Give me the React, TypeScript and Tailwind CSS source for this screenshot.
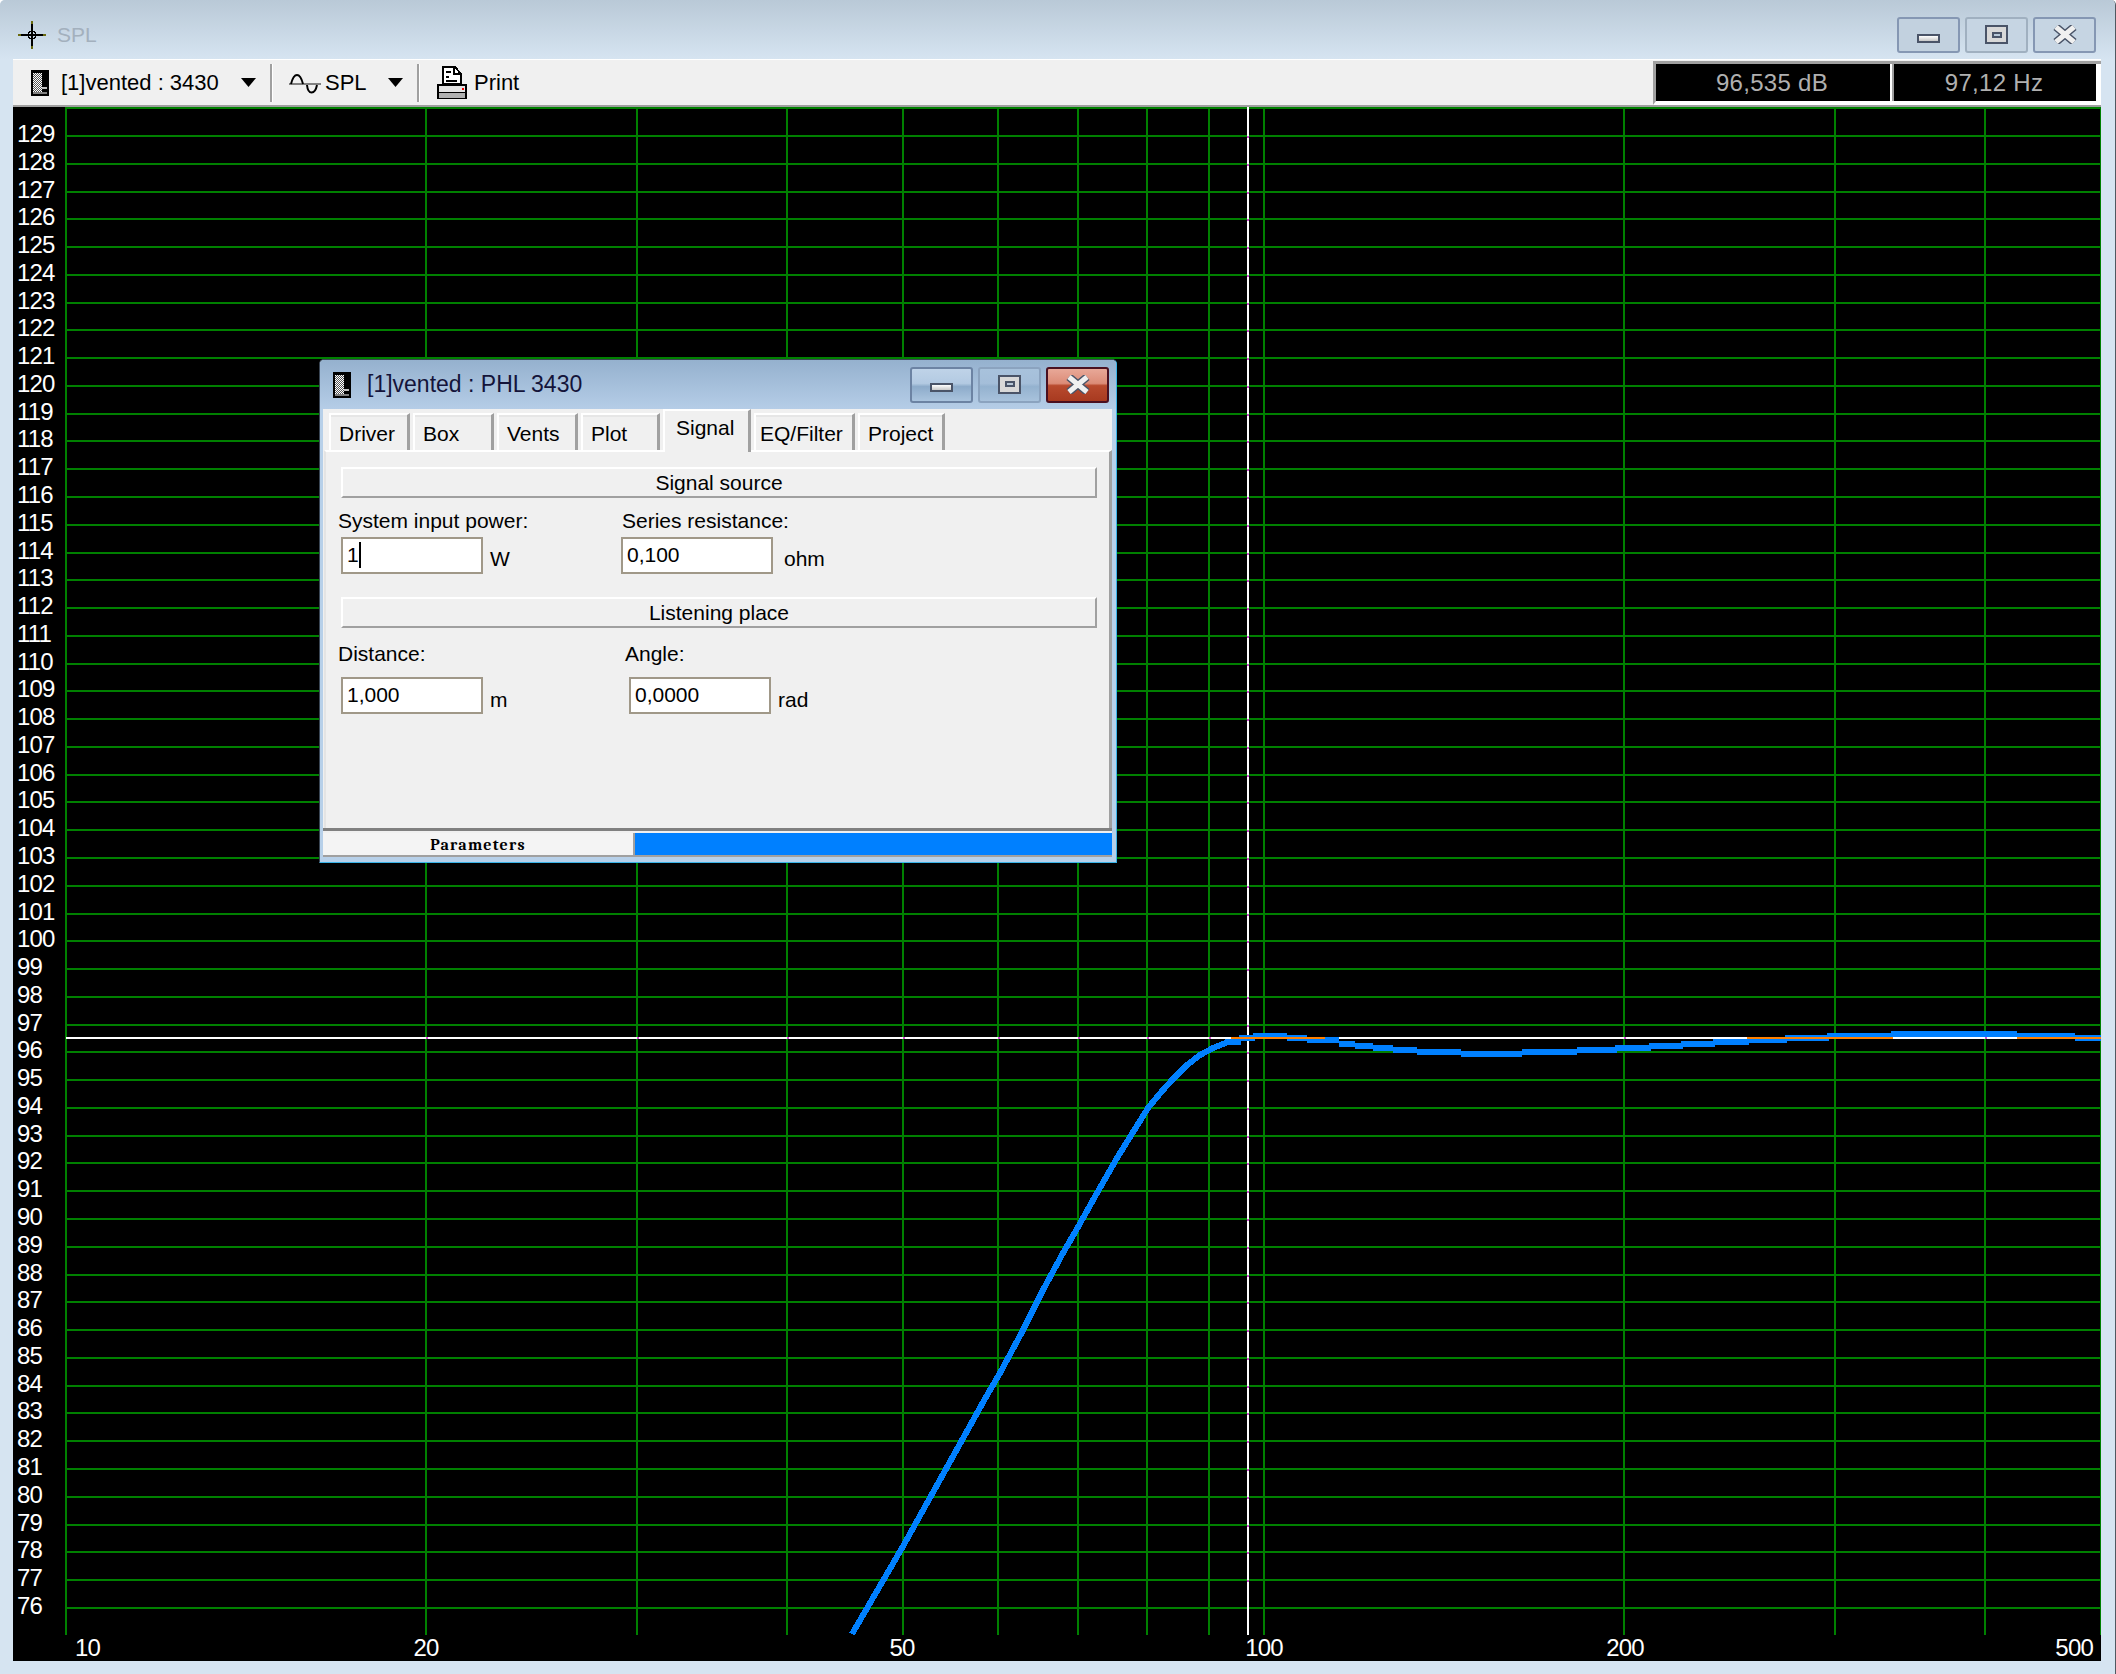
const SANS = '[font-family:Liberation_Sans,Arial,sans-serif]'

const xOf = (f: number) => 65.5 + 1198 * Math.log10(f / 10)
const yOf = (v: number) => 136 + (129 - v) * 27.77

const FREQS = [20, 30, 40, 50, 60, 70, 80, 90, 100, 200, 300, 400, 500]
const LEVELS = Array.from({ length: 55 }, (_, i) => 130 - i)
const LABELS = LEVELS.slice(1)
const CURSOR_X = 1247
const CURSOR_Y = 1037

// rising part of the response
const RISE =
  '852,1634 902,1548 986,1397 1000,1373 1022,1332 1043,1290 1063,1253 1078,1227 1097,1193 1117,1158 1130,1137 1148,1108 1163,1090 1173,1079 1187,1065 1200,1055 1213,1048 1228,1042'
// flat part, it's drawn in pixel steps: [x1, x2, centre y]
const STEPS = [
  [1225, 1241, 1042], [1239, 1255, 1038], [1253, 1287, 1036], [1287, 1307, 1038], [1307, 1339, 1040],
  [1339, 1355, 1044], [1355, 1373, 1046], [1373, 1393, 1048], [1393, 1417, 1050], [1417, 1461, 1052],
  [1461, 1522, 1054], [1522, 1577, 1052], [1577, 1617, 1050], [1615, 1651, 1048], [1649, 1683, 1046],
  [1681, 1715, 1044], [1713, 1749, 1042], [1749, 1787, 1040], [1785, 1829, 1038], [1827, 1893, 1036],
  [1891, 2017, 1034], [2017, 2075, 1036], [2075, 2101, 1038],
]
const ORANGE = [[1231, 1325], [1747, 1893], [2017, 2101]]

function Plot() {
  return (
    <svg viewBox="13 107 2088 1554" className="block w-[2088px] h-[1554px] bg-black">
      <g shapeRendering="crispEdges" stroke="#008000" strokeWidth="2">
        {LEVELS.map((v) => (
          <line key={v} x1={65} x2={2101} y1={v === 75 ? 1634 : Math.round(yOf(v))} y2={v === 75 ? 1634 : Math.round(yOf(v))} />
        ))}
        <line x1={66} x2={66} y1={107} y2={1635} />
        {FREQS.map((f) => (
          <line key={f} x1={Math.round(xOf(f))} x2={Math.round(xOf(f))} y1={107} y2={1635} />
        ))}
      </g>
      <g shapeRendering="crispEdges" fill="#ffffff">
        <rect x={CURSOR_X} y={107} width={2} height={1528} />
        <rect x={66} y={CURSOR_Y} width={2035} height={2} />
      </g>
      <g shapeRendering="crispEdges" fill="#d050d0">
        {LEVELS.slice(1, 54).map((v) => (
          <rect key={v} x={CURSOR_X} y={Math.round(yOf(v))} width={2} height={2} />
        ))}
        {FREQS.map((f) => (
          <rect key={f} x={Math.round(xOf(f))} y={CURSOR_Y} width={2} height={2} />
        ))}
      </g>
      <polyline points={RISE} fill="none" stroke="#0080ff" strokeWidth="6" shapeRendering="crispEdges" />
      <g shapeRendering="crispEdges">
        {STEPS.map(([a, b, y]) => (
          <rect key={a} x={a} y={y - 3} width={b - a} height={6} fill="#0080ff" />
        ))}
        {ORANGE.map(([a, b]) => (
          <rect key={a} x={a} y={CURSOR_Y} width={b - a} height={2} fill="#ff8000" />
        ))}
      </g>
      <g fill="#ffffff" fontFamily="'Liberation Sans', Arial, sans-serif" fontSize="24" letterSpacing="-0.8">
        {LABELS.map((v) => (
          <text key={v} x={17} y={Math.round(yOf(v)) + 6}>{v}</text>
        ))}
        <text x={75} y={1656}>10</text>
        <text x={426} y={1656} textAnchor="middle">20</text>
        <text x={902} y={1656} textAnchor="middle">50</text>
        <text x={1264} y={1656} textAnchor="middle">100</text>
        <text x={1625} y={1656} textAnchor="middle">200</text>
        <text x={2093} y={1656} textAnchor="end">500</text>
      </g>
    </svg>
  )
}

function SpeakerIcon({ id }: { id: string }) {
  return (
    <svg width="18" height="26" viewBox="0 0 18 26" shapeRendering="crispEdges" className="shrink-0">
      <defs>
        <pattern id={id} width="2" height="2" patternUnits="userSpaceOnUse">
          <rect width="2" height="2" fill="#ffffff" />
          <rect width="1" height="1" fill="#555555" />
          <rect x="1" y="1" width="1" height="1" fill="#555555" />
        </pattern>
      </defs>
      <rect width="18" height="26" fill="#000000" />
      <rect x="2" y="3" width="9" height="20" fill={`url(#${id})`} />
      <rect x="11" y="17" width="5" height="2" fill="#c0c0c0" />
      <rect x="2" y="22" width="14" height="2" fill="#808080" />
    </svg>
  )
}

function WaveIcon() {
  return (
    <svg width="32" height="24" viewBox="0 0 32 24" className="shrink-0">
      <line x1="0" y1="13" x2="32" y2="13" stroke="#808080" strokeWidth="2" />
      <path d="M2 13 C5 1 11 1 14 13" fill="none" stroke="#000000" strokeWidth="2" />
      <path d="M18 14 C19 24 26 24 28 14" fill="none" stroke="#000000" strokeWidth="2" />
    </svg>
  )
}

function PrintIcon() {
  return (
    <svg width="32" height="34" viewBox="0 0 32 34" shapeRendering="crispEdges" className="shrink-0">
      <path d="M7 1 H19 L25 8 V18 H7 Z" fill="#ffffff" stroke="#000000" strokeWidth="2" />
      <path d="M18 1 V8 H25" fill="none" stroke="#000000" strokeWidth="2" />
      <rect x="10" y="5" width="5" height="2" fill="#000000" />
      <rect x="10" y="10" width="3" height="2" fill="#000000" />
      <rect x="10" y="14" width="11" height="2" fill="#000000" />
      <rect x="1" y="18" width="30" height="15" fill="#000000" />
      <rect x="3" y="20" width="26" height="6" fill="#e4e4e4" />
      <rect x="26" y="22" width="2" height="2" fill="#ff0000" />
      <rect x="3" y="27" width="26" height="5" fill="#b0b0b0" />
    </svg>
  )
}

function CrossIcon() {
  return (
    <svg width="28" height="28" viewBox="0 0 28 28" shapeRendering="crispEdges" className="shrink-0">
      <rect x="13" y="0" width="2" height="28" fill="#6b6b10" />
      <rect x="0" y="13" width="28" height="2" fill="#6b6b10" />
      <rect x="13" y="3" width="2" height="22" fill="#000000" />
      <rect x="3" y="13" width="22" height="2" fill="#000000" />
      <circle cx="14" cy="14" r="4" fill="none" stroke="#000000" strokeWidth="1.5" />
    </svg>
  )
}

function Arrow({ className }: { className: string }) {
  return (
    <svg width="15" height="9" viewBox="0 0 15 9" className={`shrink-0 ${className}`}>
      <path d="M0 0 H15 L7.5 9 Z" fill="#000000" />
    </svg>
  )
}

function Sep() {
  return <div className="w-[3px] h-[38px] shrink-0 border-l-2 border-[#a0a0a0] bg-white" />
}

function Glyph({ kind }: { kind: 'min' | 'max' | 'close' }) {
  if (kind === 'min') {
    return <div className="w-[23px] h-[9px] mt-[6px] border-2 border-[#4a5468] bg-gradient-to-b from-white to-[#c8c8c8]" />
  }
  if (kind === 'max') {
    return (
      <div className="w-[23px] h-[19px] -mt-[1px] border-2 border-[#4a5468] bg-[#d8d8d8] flex items-center justify-center">
        <div className="w-[10px] h-[6px] border-2 border-[#4a5468] bg-[#b8c8d8]" />
      </div>
    )
  }
  return (
    <svg width="24" height="19" viewBox="0 0 24 19" className="-mt-[1px]">
      <path d="M3 2 L21 17 M21 2 L3 17" stroke="#4a5468" strokeWidth="8" />
      <path d="M3 2 L21 17 M21 2 L3 17" stroke="#f0f0f0" strokeWidth="5" />
    </svg>
  )
}

function WinButton({ kind, look }: { kind: 'min' | 'max' | 'close'; look: string }) {
  return (
    <div className={`w-[63px] h-[36px] rounded-[3px] border-2 flex items-center justify-center ${look}`}>
      <Glyph kind={kind} />
    </div>
  )
}

const TABS = [
  { label: 'Driver', w: 'w-[81px]' },
  { label: 'Box', w: 'w-[81px]' },
  { label: 'Vents', w: 'w-[81px]' },
  { label: 'Plot', w: 'w-[79px]' },
  { label: 'Signal', w: 'w-[88px]', active: true },
  { label: 'EQ/Filter', w: 'w-[101px]' },
  { label: 'Project', w: 'w-[87px]' },
]

function Tabs() {
  return (
    <div className="flex items-end gap-[3px] pl-[6px] h-[41px] relative z-10">
      {TABS.map((t) =>
        t.active ? (
          <div key={t.label} className={`${t.w} h-[43px] -mb-[2px] bg-[#f0f0f0] border-t-2 border-l-2 border-white border-r-[3px] border-r-[#a0a0a0] pl-[11px] pb-[7px] flex items-center text-[21px] text-black`}>
            {t.label}
          </div>
        ) : (
          <div key={t.label} className={`${t.w} h-[37px] bg-[#f0f0f0] border-t-2 border-l-2 border-white border-r-[3px] border-r-[#a0a0a0]`}>
            <div className={`h-full border-t-2 border-[#e6e6e6] flex items-center text-[21px] text-black whitespace-nowrap ${t.label === 'EQ/Filter' ? 'pl-[4px]' : 'pl-[8px]'}`}>{t.label}</div>
          </div>
        ),
      )}
    </div>
  )
}

function Group({ title, className }: { title: string; className: string }) {
  return (
    <div className={`w-[756px] h-[31px] ml-[15px] border-t-2 border-l-2 border-white border-b-2 border-r-2 border-b-[#a0a0a0] border-r-[#a0a0a0] flex items-center justify-center text-[21px] text-black ${className}`}>
      {title}
    </div>
  )
}

function Field({ value, unit, caret, inputW, unitClass }: { value: string; unit: string; caret?: boolean; inputW: string; unitClass: string }) {
  return (
    <div className="flex items-start h-[37px]">
      <div className={`${inputW} h-[37px] border-2 border-[#a09888] bg-white pl-[4px] pb-[2px] flex items-center text-[21px] text-black`}>
        {value}
        {caret && <span className="w-[2px] h-[26px] bg-black" />}
      </div>
      <span className={`leading-[24px] text-[21px] text-black ${unitClass}`}>{unit}</span>
    </div>
  )
}

function Dialog() {
  return (
    <div className={`absolute left-[319px] top-[359px] w-[798px] h-[504px] rounded-t-[5px] border border-[#3a4654] border-r-[#3ab4e8] border-b-[#3ab4e8] bg-[#b7d0e9] flex flex-col ${SANS}`}>
      <div className="h-[49px] shrink-0 flex items-center rounded-t-[4px] bg-gradient-to-b from-[#95b1ce] to-[#b5cde7] pl-[13px] pr-[7px]">
        <SpeakerIcon id="dither-dialog" />
        <span className="ml-[16px] text-[23px] text-[#14143a]">[1]vented : PHL 3430</span>
        <div className="ml-auto flex gap-[5px]">
          <WinButton kind="min" look="border-[#6c83a3] bg-[linear-gradient(#bfd3e8,#b3cae2_45%,#8dabca_55%,#aac4de)]" />
          <WinButton kind="max" look="border-[#8ba3bf] bg-[linear-gradient(#a8c2dc,#a4bed9_45%,#94b2cf_55%,#a8c2dc)]" />
          <WinButton kind="close" look="border-[#4a1020] bg-[linear-gradient(#e8a898,#dc8c78_45%,#b84a2e_52%,#a83a20)]" />
        </div>
      </div>
      <div className="flex-1 ml-[3px] mr-[4px] mb-[6px] bg-[#f0f0f0] flex flex-col">
        <Tabs />
        <div className="h-[378px] shrink-0 border-t-2 border-white border-l-2 border-l-[#e4e4e4] border-r-[3px] border-r-[#a0a0a0] ml-[1px] pt-[15px] text-[21px] text-black">
          <Group title="Signal source" className="" />
          <div className="flex pl-[12px] mt-[11px] leading-[24px]">
            <span className="w-[284px]">System input power:</span>
            <span>Series resistance:</span>
          </div>
          <div className="flex pl-[15px] mt-[4px]">
            <div className="w-[280px]">
              <Field value="1" caret unit="W" inputW="w-[142px]" unitClass="ml-[7px] mt-[10px]" />
            </div>
            <Field value="0,100" unit="ohm" inputW="w-[152px]" unitClass="ml-[11px] mt-[10px]" />
          </div>
          <Group title="Listening place" className="mt-[23px]" />
          <div className="flex pl-[12px] mt-[14px] leading-[24px]">
            <span className="w-[287px]">Distance:</span>
            <span>Angle:</span>
          </div>
          <div className="flex pl-[15px] mt-[11px]">
            <div className="w-[288px]">
              <Field value="1,000" unit="m" inputW="w-[142px]" unitClass="ml-[7px] mt-[11px]" />
            </div>
            <Field value="0,0000" unit="rad" inputW="w-[142px]" unitClass="ml-[7px] mt-[11px]" />
          </div>
        </div>
        <div className="h-[3px] shrink-0 bg-[#808080]" />
        <div className="h-[24px] shrink-0 mt-[2px] flex border-b-2 border-[#a0a0a0] bg-white">
          <div className="w-[312px] pt-[1px] flex items-center justify-center border-r-2 border-[#a0a0a0] font-serif font-bold text-[16px] tracking-[1.2px] text-black bg-[#f4f4f4]">
            Parameters
          </div>
          <div className="flex-1 bg-[#0080ff]" />
        </div>
      </div>
    </div>
  )
}

export default function App() {
  return (
    <div className={`relative w-[2116px] h-[1674px] overflow-hidden rounded-t-[5px] border-r border-[#505860] bg-[#d6e4f1] ${SANS}`}>
      <div className="h-[59px] flex items-start bg-gradient-to-b from-[#b9c9d7] to-[#d6e4f1]">
        <div className="ml-[18px] mt-[19px] flex items-center">
          <CrossIcon />
          <span className="ml-[11px] text-[21px] text-[#a3b0bd]">SPL</span>
        </div>
        <div className="ml-auto mr-[19px] mt-[17px] flex gap-[5px]">
          <WinButton kind="min" look="border-[#8597b3] bg-[#c2d1df]" />
          <WinButton kind="max" look="border-[#a0b0c0] bg-[#c6d5e3]" />
          <WinButton kind="close" look="border-[#8597b3] bg-[#c6d5e3]" />
        </div>
      </div>
      <div className="ml-[13px] w-[2088px]">
        <div className="h-[48px] flex items-center border-t border-white border-b-2 border-b-[#a0a0a0] bg-[#f0f0f0] text-[22px] text-black">
          <div className="ml-[18px]"><SpeakerIcon id="dither-toolbar" /></div>
          <span className="ml-[12px] w-[157px] whitespace-nowrap">[1]vented : 3430</span>
          <Arrow className="ml-[23px]" />
          <div className="ml-[14px]"><Sep /></div>
          <div className="ml-[16px]"><WaveIcon /></div>
          <span className="ml-[4px] w-[42px]">SPL</span>
          <Arrow className="ml-[21px]" />
          <div className="ml-[14px]"><Sep /></div>
          <div className="ml-[16px]"><PrintIcon /></div>
          <span className="ml-[6px]">Print</span>
          <div className="ml-auto h-[44px] flex self-start mt-[1px] border-t-[3px] border-l-[3px] border-[#a0a0a0] border-b-4 border-b-white text-[24px] text-[#b0b0b0] bg-white">
            <div className="w-[234px] h-[37px] bg-black flex items-center justify-center tracking-[0.3px] pr-[2px]">96,535 dB</div>
            <div className="w-[2px] h-[37px] bg-white" />
            <div className="w-[2px] h-[37px] bg-[#a0a0a0]" />
            <div className="w-[202px] h-[37px] bg-black flex items-center justify-center tracking-[0.3px] pr-[2px]">97,12 Hz</div>
            <div className="w-[5px] h-[37px] bg-white" />
          </div>
        </div>
        <Plot />
      </div>
      <Dialog />
    </div>
  )
}
